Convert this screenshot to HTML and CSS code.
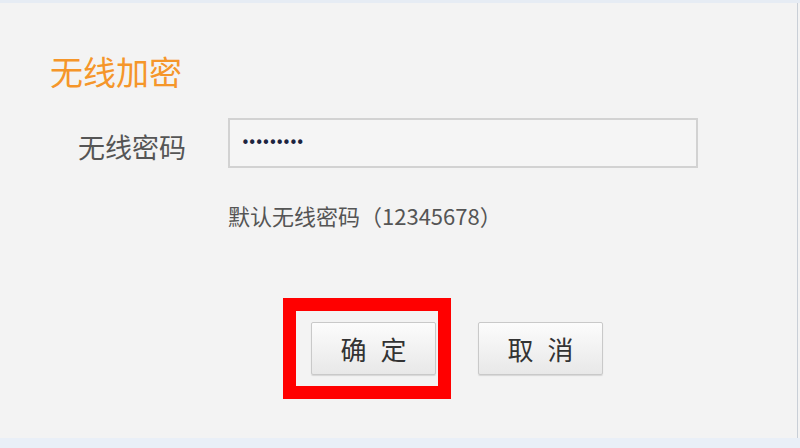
FILE: index.html
```html
<!DOCTYPE html>
<html lang="zh-CN">
<head>
    <meta charset="UTF-8">
    <title>无线加密</title>
    <link rel="stylesheet" href="styles.css">
</head>
<body>
    <div class="topbar"></div>

    <main class="panel">
        <h1 class="title">无线加密</h1>

        <div class="form-row">
            <label class="label" for="wifi-pwd">无线密码</label>
            <input class="input" id="wifi-pwd" type="password" value="12345678a">
        </div>

        <p class="hint">默认无线密码（12345678）</p>

        <div class="actions">
            <span class="mark">
                <button class="btn">确 定</button>
            </span>
            <button class="btn">取 消</button>
        </div>
    </main>

    <div class="bottombar"></div>
</body>
</html>
```

FILE: styles.css
```css
/* Router settings dialog */
html, body {
    height: 100%;
}

body {
    margin: 0;
    display: flex;
    flex-direction: column;
    background: #f3f3f3;
    font-family: "Noto Sans CJK SC", "Noto Sans", sans-serif;
    color: #555;
    overflow: hidden;
}

.topbar {
    height: 3px;
    background: #e6ecf4;
}

.bottombar {
    height: 10px;
    background: #e9eff7;
}

.panel {
    flex: 1;
    border-right: 1px solid #c9cfd7;
    margin-right: 2px;
}

.title {
    margin: 48px 0 0 50px;
    font-size: 33px;
    line-height: 40px;
    font-weight: normal;
    color: #f5962a;
}

.form-row {
    display: flex;
    align-items: flex-start;
    margin-top: 27px;
    padding-left: 78px;
}

.label {
    font-size: 27px;
    line-height: 50px;
    padding-top: 4px;
    margin-right: 42px;
    color: #555;
}

.input {
    box-sizing: border-box;
    width: 470px;
    height: 50px;
    border: 2px solid #d2d2d2;
    background: #f5f5f5;
    padding: 0 11px;
    font-family: "DejaVu Sans", sans-serif;
    font-size: 15px;
    letter-spacing: -2px;
    color: #1d2440;
    outline: none;
}

.hint {
    margin: 28px 0 0 228px;
    font-size: 22px;
    line-height: 30px;
    color: #555;
}

.actions {
    display: flex;
    gap: 42px;
    margin-top: 92px;
    padding-left: 311px;
}

.btn {
    box-sizing: border-box;
    width: 125px;
    height: 53px;
    border: 1px solid #c9c9c9;
    border-radius: 2px;
    background: linear-gradient(#fcfcfc, #e8e8e8);
    box-shadow: 0 1px 1px rgba(0, 0, 0, 0.12);
    font-family: inherit;
    font-size: 26px;
    word-spacing: 8px;
    color: #333;
    padding: 0;
}

/* red annotation frame around the confirm button */
.mark {
    position: relative;
    display: block;
}

.mark::after {
    content: "";
    position: absolute;
    top: -24px;
    bottom: -24px;
    left: -28px;
    right: -15px;
    border: 13px solid #ff0000;
}
```
